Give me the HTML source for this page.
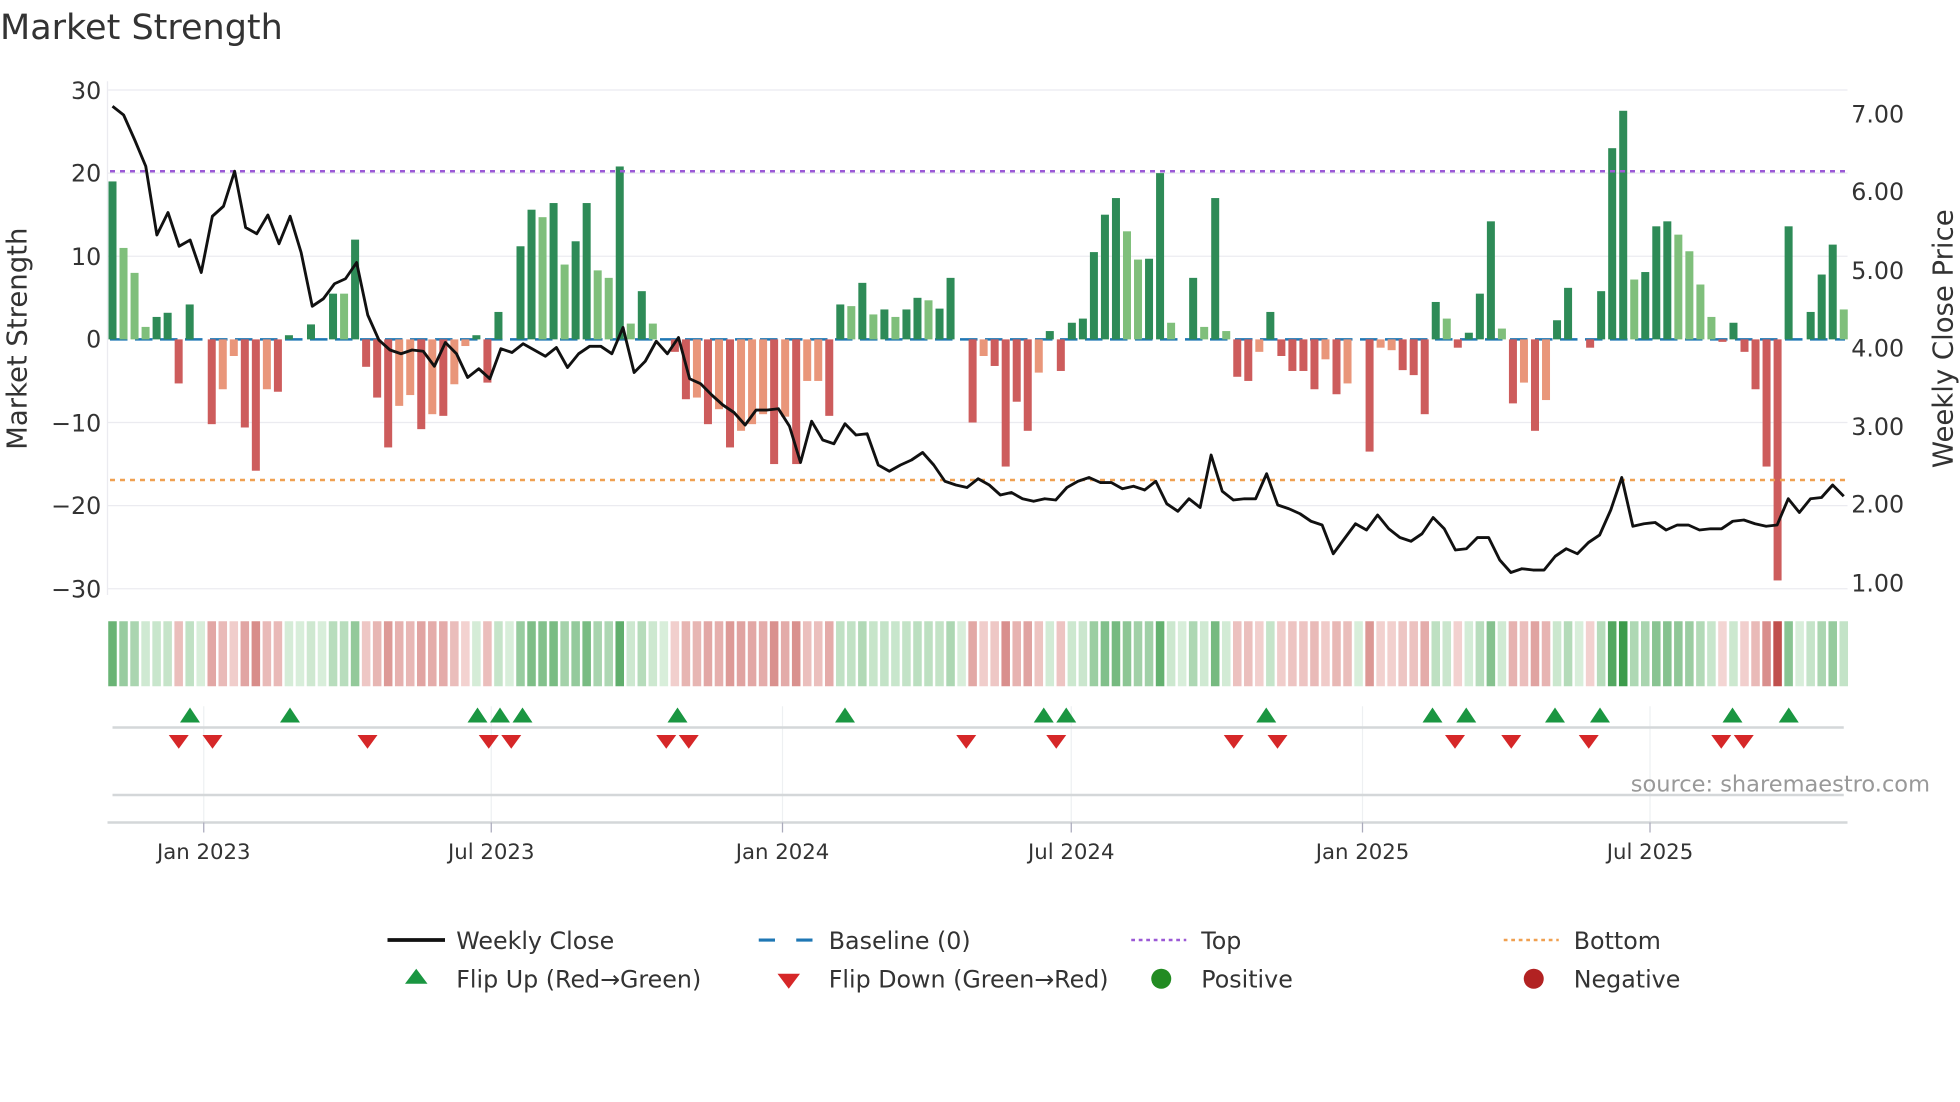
<!DOCTYPE html>
<html><head><meta charset="utf-8"><style>
html,body{margin:0;padding:0;background:#fff;}
svg{display:block;font-family:"DejaVu Sans","Liberation Sans",sans-serif;}
</style></head><body>
<svg id="s" width="1960" height="1102" viewBox="0 0 1568 881.6" xmlns="http://www.w3.org/2000/svg">
<rect width="1568" height="882" fill="#fff"/>
<text x="0" y="31" font-size="28" fill="#333">Market Strength</text>
<g stroke="#ebebf0" stroke-width="1">
<line x1="86" x2="1478" y1="72" y2="72"/><line x1="86" x2="1478" y1="138.5" y2="138.5"/>
<line x1="86" x2="1478" y1="205" y2="205"/><line x1="86" x2="1478" y1="338" y2="338"/>
<line x1="86" x2="1478" y1="404.5" y2="404.5"/><line x1="86" x2="1478" y1="471" y2="471"/>
<line x1="86" x2="86" y1="65" y2="476"/>
</g>
<g font-size="19" fill="#333" text-anchor="end">
<text x="81" y="79">30</text><text x="81" y="145">20</text><text x="81" y="212">10</text>
<text x="81" y="278">0</text><text x="81" y="345">−10</text><text x="81" y="411">−20</text><text x="81" y="478">−30</text>
</g>
<g font-size="19" fill="#333">
<text x="1481" y="98">7.00</text><text x="1481" y="160">6.00</text><text x="1481" y="223">5.00</text>
<text x="1481" y="285">4.00</text><text x="1481" y="348">3.00</text><text x="1481" y="410">2.00</text><text x="1481" y="473">1.00</text>
</g>
<text transform="translate(21,271) rotate(-90)" font-size="22" fill="#333" text-anchor="middle">Market Strength</text>
<text transform="translate(1562,271) rotate(-90)" font-size="22" fill="#333" text-anchor="middle">Weekly Close Price</text>
<line x1="88" x2="1476" y1="271.5" y2="271.5" stroke="#1f77b4" stroke-width="2" stroke-dasharray="14 6"/>
<g id="bars"></g>
<line x1="88" x2="1476" y1="137" y2="137" stroke="#9b59d6" stroke-width="2" stroke-dasharray="4 4"/>
<line x1="88" x2="1476" y1="384" y2="384" stroke="#f0a050" stroke-width="2" stroke-dasharray="4 4"/>
<polyline id="price" fill="none" stroke="#111" stroke-width="2.3" stroke-linejoin="round"/>
<g id="heat"></g>
<g stroke="#eef0f2" stroke-width="1">
<line x1="163" x2="163" y1="565" y2="658"/><line x1="393" x2="393" y1="565" y2="658"/>
<line x1="626" x2="626" y1="565" y2="658"/><line x1="857" x2="857" y1="565" y2="658"/>
<line x1="1090" x2="1090" y1="565" y2="658"/><line x1="1320" x2="1320" y1="565" y2="658"/>
</g>
<line x1="90" x2="1475" y1="582" y2="582" stroke="#d4d7d9" stroke-width="2"/>
<line x1="90" x2="1475" y1="636" y2="636" stroke="#d4d7d9" stroke-width="2"/>
<line x1="86" x2="1478" y1="658" y2="658" stroke="#d4d7d9" stroke-width="2"/>
<g stroke="#aab" stroke-width="1">
<line x1="163" x2="163" y1="658" y2="666"/><line x1="393" x2="393" y1="658" y2="666"/>
<line x1="626" x2="626" y1="658" y2="666"/><line x1="857" x2="857" y1="658" y2="666"/>
<line x1="1090" x2="1090" y1="658" y2="666"/><line x1="1320" x2="1320" y1="658" y2="666"/>
</g>
<g id="flips"></g>
<text x="1544" y="633" font-size="18" fill="#999" text-anchor="end">source: sharemaestro.com</text>
<g font-size="17" fill="#333" text-anchor="middle">
<text x="163" y="687">Jan 2023</text><text x="393" y="687">Jul 2023</text><text x="626" y="687">Jan 2024</text>
<text x="857" y="687">Jul 2024</text><text x="1090" y="687">Jan 2025</text><text x="1320" y="687">Jul 2025</text>
</g>
<g font-size="19" fill="#333">
<line x1="310" x2="356" y1="752" y2="752" stroke="#111" stroke-width="3"/>
<text x="365" y="759">Weekly Close</text>
<line x1="607" x2="652" y1="752" y2="752" stroke="#1f77b4" stroke-width="2.5" stroke-dasharray="13 17"/>
<text x="663" y="759">Baseline (0)</text>
<line x1="905" x2="949" y1="752" y2="752" stroke="#9b59d6" stroke-width="2" stroke-dasharray="3 3"/>
<text x="961" y="759">Top</text>
<line x1="1203" x2="1247" y1="752" y2="752" stroke="#f0a050" stroke-width="2" stroke-dasharray="3 3"/>
<text x="1259" y="759">Bottom</text>
<polygon points="333,775 342,787 324,787" fill="#1a9641"/>
<text x="365" y="790">Flip Up (Red→Green)</text>
<polygon points="622,779 640,779 631,791" fill="#d62728"/>
<text x="663" y="790">Flip Down (Green→Red)</text>
<circle cx="929" cy="783" r="8" fill="#228b22"/>
<text x="961" y="790">Positive</text>
<circle cx="1227" cy="783" r="8" fill="#b22222"/>
<text x="1259" y="790">Negative</text>
</g>
</svg>
<script>
var NS="http://www.w3.org/2000/svg";
var V=[[19,'d'],[11,'l'],[8,'l'],[1.5,'l'],[2.7,'d'],[3.2,'d'],[-5.3,'r'],[4.2,'d'],[0,'d'],[-10.2,'r'],[-6,'o'],[-2,'o'],[-10.6,'r'],[-15.8,'r'],[-6,'o'],[-6.3,'r'],[0.5,'d'],[0,'d'],[1.8,'d'],[0,'d'],[5.5,'d'],[5.5,'l'],[12,'d'],[-3.3,'r'],[-7,'r'],[-13,'r'],[-8,'o'],[-6.7,'o'],[-10.8,'r'],[-9,'o'],[-9.2,'r'],[-5.4,'o'],[-0.8,'o'],[0.5,'d'],[-5.2,'r'],[3.3,'d'],[0,'d'],[11.2,'d'],[15.6,'d'],[14.7,'l'],[16.4,'d'],[9,'l'],[11.8,'d'],[16.4,'d'],[8.3,'l'],[7.4,'l'],[20.8,'d'],[1.9,'l'],[5.8,'d'],[1.9,'l'],[0,'d'],[-1.5,'r'],[-7.2,'r'],[-7,'o'],[-10.2,'r'],[-8.4,'o'],[-13,'r'],[-11,'o'],[-10.2,'o'],[-9,'o'],[-15,'r'],[-9.3,'o'],[-15,'r'],[-5,'o'],[-5,'o'],[-9.2,'r'],[4.2,'d'],[4,'l'],[6.8,'d'],[3,'l'],[3.6,'d'],[2.7,'l'],[3.6,'d'],[5,'d'],[4.7,'l'],[3.7,'d'],[7.4,'d'],[0,'d'],[-10,'r'],[-2,'o'],[-3.2,'r'],[-15.3,'r'],[-7.5,'r'],[-11,'r'],[-4,'o'],[1,'d'],[-3.8,'r'],[2,'d'],[2.5,'d'],[10.5,'d'],[15,'d'],[17,'d'],[13,'l'],[9.6,'l'],[9.7,'d'],[20,'d'],[2,'l'],[0,'d'],[7.4,'d'],[1.5,'l'],[17,'d'],[1,'l'],[-4.5,'r'],[-5,'r'],[-1.5,'o'],[3.3,'d'],[-2,'r'],[-3.8,'r'],[-3.8,'r'],[-6,'r'],[-2.4,'o'],[-6.6,'r'],[-5.3,'o'],[0,'d'],[-13.5,'r'],[-1,'o'],[-1.3,'o'],[-3.7,'r'],[-4.3,'r'],[-9,'r'],[4.5,'d'],[2.5,'l'],[-1,'r'],[0.8,'d'],[5.5,'d'],[14.2,'d'],[1.3,'l'],[-7.7,'r'],[-5.2,'o'],[-11,'r'],[-7.3,'o'],[2.3,'d'],[6.2,'d'],[0,'d'],[-1,'r'],[5.8,'d'],[23,'d'],[27.5,'d'],[7.2,'l'],[8.1,'d'],[13.6,'d'],[14.2,'d'],[12.6,'l'],[10.6,'l'],[6.6,'l'],[2.7,'l'],[-0.3,'r'],[2,'d'],[-1.5,'r'],[-6,'r'],[-15.3,'r'],[-29,'r'],[13.6,'d'],[0,'d'],[3.3,'d'],[7.8,'d'],[11.4,'d'],[3.6,'l']];
var P=[85,92,112,133,188,170,197,192,218,173,165,137,182,187,172,195,173,202,245,239,227,223,210,252,272,280,283,280,281,293,274,283,302,295,303,279,282,275,280,285,278,294,283,277,277,283,262,298,289,273,283,270,303,307,316,324,330,340,328,328,327,341,370,337,352,355,339,348,347,372,377,372,368,362,372,385,388,390,383,388,396,394,399,401,399,400,390,385,382,386,386,391,389,392,385,403,409,399,406,364,393,400,399,399,379,404,407,411,417,420,443,431,419,424,412,423,430,433,427,414,423,440,439,430,430,448,458,455,456,456,445,439,443,434,428,408,382,421,419,418,424,420,420,424,423,423,417,416,419,421,420,399,410,399,398,388,397];
var C={d:'#2e8b57',l:'#7fbf7b',r:'#cd5c5c',o:'#e9967a'};
var n=V.length,step=1385/(n-1),bars=document.getElementById('bars'),heat=document.getElementById('heat');
function mix(a,b,t){return 'rgb('+a.map(function(v,i){return Math.round(v+(b[i]-v)*t)}).join(',')+')';}
for(var i=0;i<n;i++){var x=90+i*step,v=V[i][0];
 if(v!==0){var r=document.createElementNS(NS,'rect');var y0=271.5,y1=271.5-v*6.65;
 r.setAttribute('x',x-3.2);r.setAttribute('width',6.4);r.setAttribute('y',Math.min(y0,y1));r.setAttribute('height',Math.abs(y1-y0));r.setAttribute('fill',C[V[i][1]]);bars.appendChild(r);}
 var h=document.createElementNS(NS,'rect');h.setAttribute('x',x-step/2+1);h.setAttribute('width',step-2);h.setAttribute('y',497);h.setAttribute('height',52);
 var col=v>=0?mix([216,238,218],[60,155,75],Math.min(1,v/27)):mix([244,214,212],[192,80,77],Math.min(1,-v/29));
 h.setAttribute('fill',col);heat.appendChild(h);}
var pts=[],ps=1385/(P.length-1);
for(var j=0;j<P.length;j++)pts.push((90+j*ps).toFixed(1)+','+P[j]);
document.getElementById('price').setAttribute('points',pts.join(' '));
var up=[152,232,382,400,418,542,676,835,853,1013,1146,1173,1244,1280,1386,1431],dn=[143,170,294,391,409,533,551,773,845,987,1022,1164,1209,1271,1377,1395],f=document.getElementById('flips');
up.forEach(function(x){var p=document.createElementNS(NS,'polygon');p.setAttribute('points',x+',566 '+(x+8)+',578 '+(x-8)+',578');p.setAttribute('fill','#1a9641');f.appendChild(p);});
dn.forEach(function(x){var p=document.createElementNS(NS,'polygon');p.setAttribute('points',(x-8)+',588 '+(x+8)+',588 '+x+',599');p.setAttribute('fill','#d62728');f.appendChild(p);});
</script>
</body></html>
